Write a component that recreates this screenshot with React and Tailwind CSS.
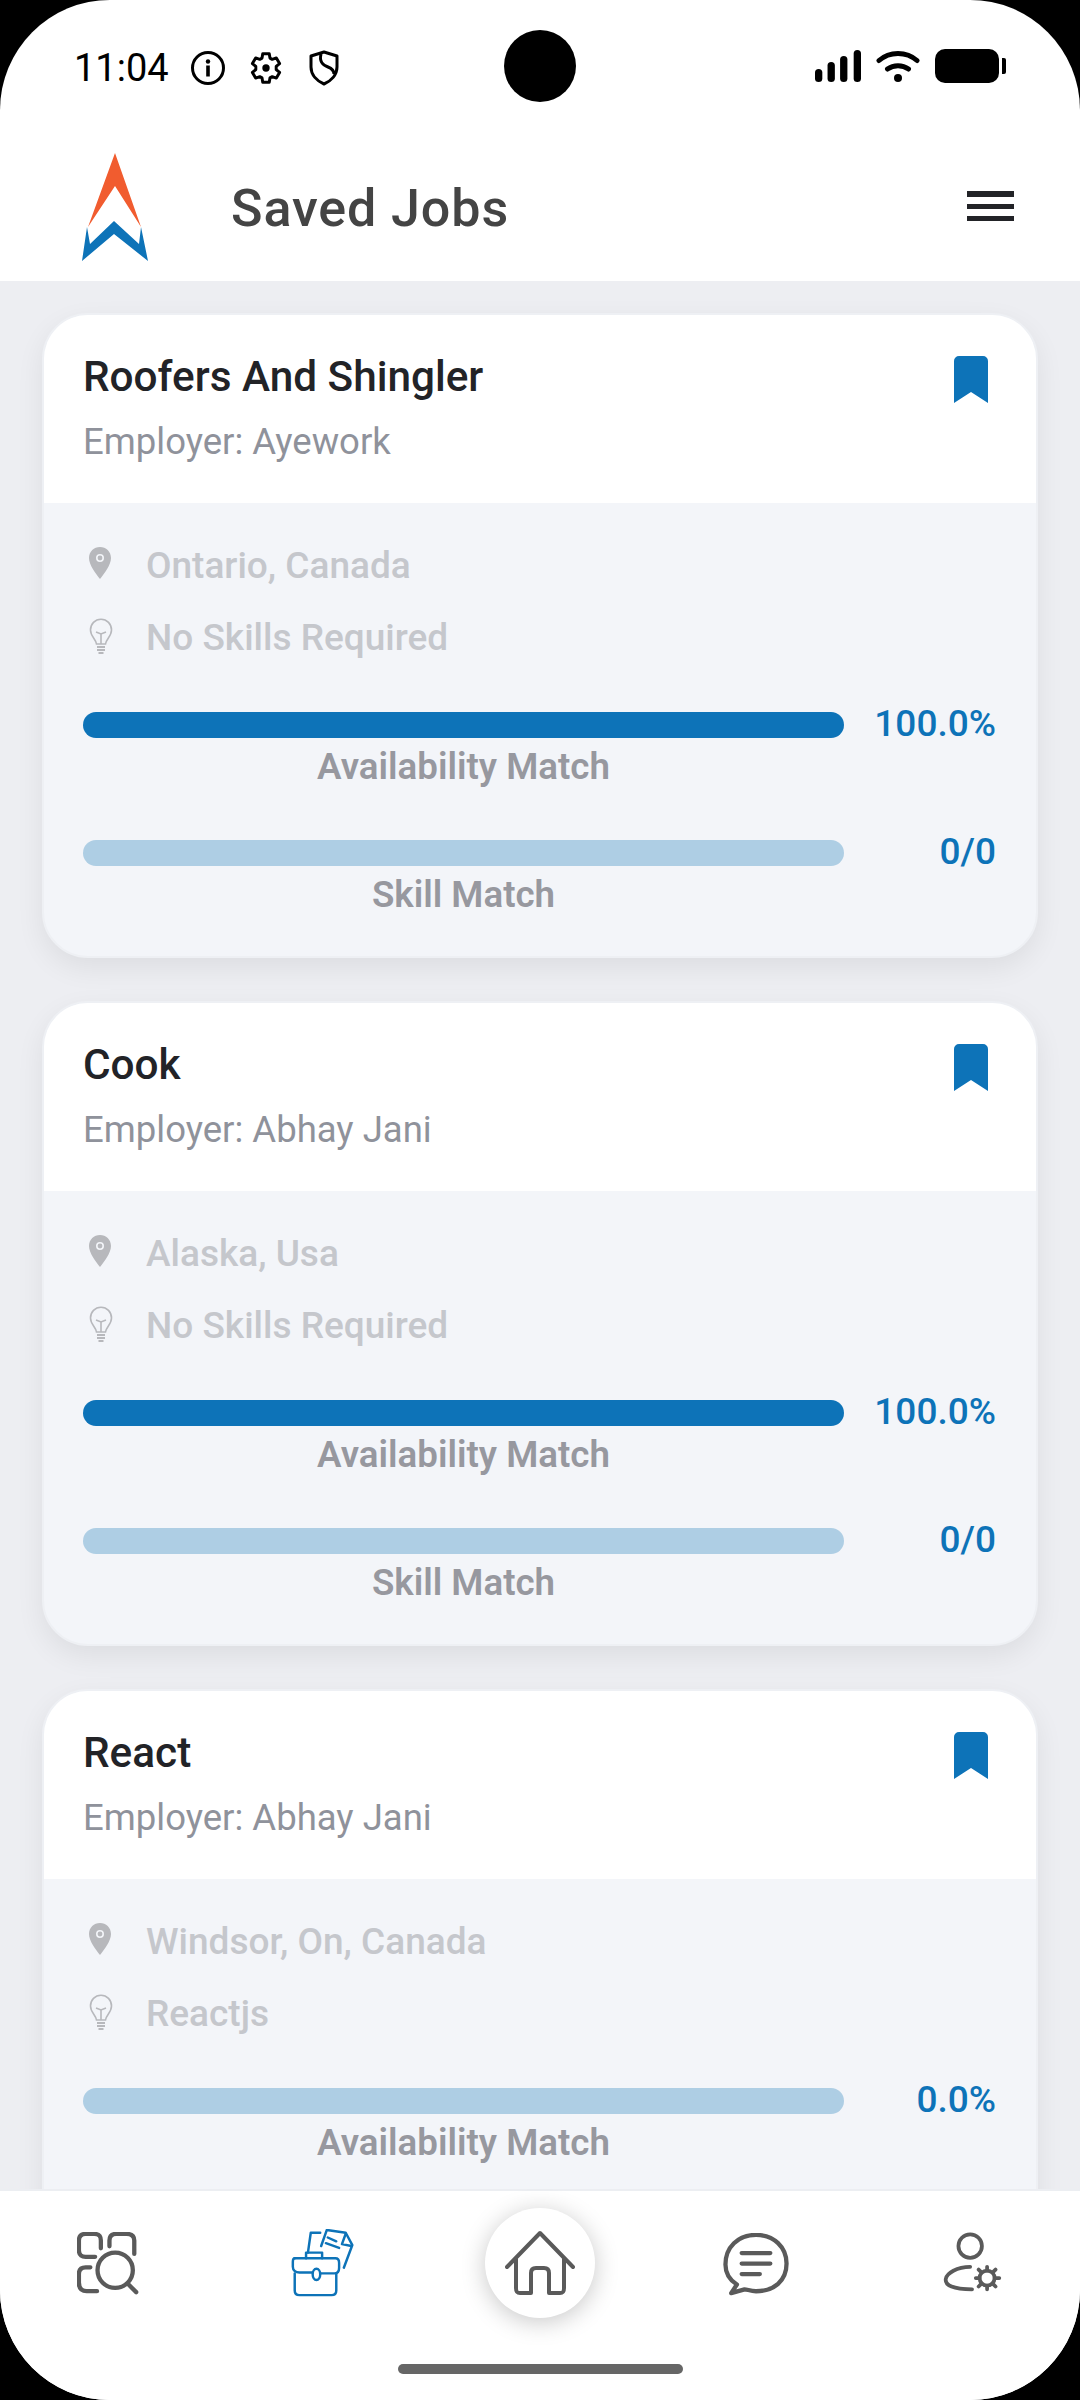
const BLUE = '#0d73b8'

const JOBS = [
  {
    title: 'Roofers And Shingler',
    employer: 'Employer: Ayework',
    location: 'Ontario, Canada',
    skills: 'No Skills Required',
    availability: '100.0%',
    availabilityFull: true,
    skill: '0/0',
  },
  {
    title: 'Cook',
    employer: 'Employer: Abhay Jani',
    location: 'Alaska, Usa',
    skills: 'No Skills Required',
    availability: '100.0%',
    availabilityFull: true,
    skill: '0/0',
  },
  {
    title: 'React',
    employer: 'Employer: Abhay Jani',
    location: 'Windsor, On, Canada',
    skills: 'Reactjs',
    availability: '0.0%',
    availabilityFull: false,
    skill: '0/0',
  },
]

function StatusBar() {
  return (
    <div className="relative h-[132px] shrink-0 flex items-start justify-between pt-[48px] pl-[75px] pr-[74px]">
      <div className="flex items-center h-[36px] mt-[2px]">
        <span className="ml-[-1px] text-[38px] leading-none text-black w-[91px]">11:04</span>
        <svg className="ml-[25px]" width="36" height="36" viewBox="0 0 36 36" fill="none">
          <circle cx="18" cy="18" r="15.5" stroke="#000" strokeWidth="3" />
          <circle cx="18" cy="11.5" r="2.2" fill="#000" />
          <rect x="16.2" y="15.5" width="3.6" height="11" fill="#000" />
        </svg>
        <svg className="ml-[23px]" width="34" height="36" viewBox="0 0 24 24" fill="none" stroke="#000" strokeWidth="2.1">
          <path d="M9.7 2h4.6l.5 3 1.6.9 2.9-1 2.3 4-2.4 2v2.2l2.4 2-2.3 4-2.9-1-1.6.9-.5 3H9.7l-.5-3-1.6-.9-2.9 1-2.3-4 2.4-2v-2.2l-2.4-2 2.3-4 2.9 1 1.6-.9z" strokeLinejoin="round" />
          <circle cx="12" cy="12" r="2.6" fill="#000" stroke="none" />
        </svg>
        <svg className="ml-[26px]" width="30" height="36" viewBox="0 0 30 36" fill="none" stroke="#000" strokeWidth="3">
          <path d="M15 2 L28 6 V17 C28 25 22 31 15 34 C8 31 2 25 2 17 V6 Z" strokeLinejoin="round" />
          <path d="M12 4 C10 12 14 15 19 17 C24 19 25 21 25 24" />
        </svg>
      </div>
      <div className="absolute left-[504px] top-[30px] w-[72px] h-[72px] rounded-full bg-black" />
      <div className="flex items-center h-[36px]">
        <svg width="46" height="32" viewBox="0 0 44 32" fill="#000" preserveAspectRatio="none">
          <rect x="0" y="19" width="7" height="13" rx="3.5" />
          <rect x="12" y="12" width="7" height="20" rx="3.5" />
          <rect x="24" y="6" width="7" height="26" rx="3.5" />
          <rect x="37" y="0" width="7" height="32" rx="3.5" />
        </svg>
        <svg className="ml-[15px]" width="44" height="32" viewBox="0 0 43 32" fill="none" stroke="#000" strokeWidth="5" strokeLinecap="round">
          <path d="M2.5 10.5 C13 1 30 1 40.5 10.5" />
          <path d="M11 19 C17 14.5 26 14.5 32 19" />
          <circle cx="21.5" cy="28" r="4" fill="#000" stroke="none" />
        </svg>
        <div className="ml-[15px] w-[64px] h-[34px] rounded-[10px] bg-black" />
        <div className="ml-[3px] w-[4px] h-[16px] rounded-r-[2px] bg-black" />
      </div>
    </div>
  )
}

function Header() {
  return (
    <div className="h-[149px] shrink-0 flex items-start justify-between pl-[82px] pr-[66px]">
      <div className="flex items-start">
        <svg className="mt-[21px]" width="66" height="109" viewBox="0 0 66 109">
          <path d="M33 0 L59 74 L33 33 L6 74 Z" fill="#f15c2f" />
          <path d="M5 74 L8 91 L32 68 L57 91 L59 74 L66 108 L32 81 L0 108 Z" fill={BLUE} />
        </svg>
        <h1 className="ml-[83px] mt-[47px] text-[52px] leading-[60px] font-medium tracking-[0.9px] text-[#444444]">
          Saved Jobs
        </h1>
      </div>
      <div className="mt-[59px] flex flex-col gap-[7px] w-[47px]">
        <div className="h-[6px] bg-[#222327]" />
        <div className="h-[5px] bg-[#222327]" />
        <div className="h-[5px] bg-[#222327]" />
      </div>
    </div>
  )
}

function PinIcon() {
  return (
    <svg width="22" height="32" viewBox="0 0 22 32" className="mt-[-6px]">
      <path fillRule="evenodd" d="M11 0 C17 0 22 4.5 22 11 C22 18 15 27 11 32 C7 27 0 18 0 11 C0 4.5 5 0 11 0 Z M11 7 A4 4 0 1 0 11 15 A4 4 0 1 0 11 7 Z" fill="#b7b8bc" />
      <circle cx="11" cy="11" r="2.4" fill="#b7b8bc" />
    </svg>
  )
}

function BulbIcon() {
  return (
    <svg width="24" height="36" viewBox="0 0 24 36" fill="none" stroke="#b7b8bc" strokeWidth="1.6" className="mt-[-4px]">
      <path d="M7.5 26 C7 21 1.5 18.5 1.5 12 C1.5 6 6 1.2 12 1.2 C18 1.2 22.5 6 22.5 12 C22.5 18.5 17 21 16.5 26 Z" />
      <path d="M7 14 L12 16 L17 14 M12 16 V26" />
      <path d="M8 29 H16 M8 32 H16 M9.5 35 H14.5" strokeWidth="2" />
    </svg>
  )
}

function InfoRow({ icon, text }) {
  return (
    <div className="flex items-center h-[40px]">
      <div className="w-[63px] pl-[6px] flex justify-start">{icon}</div>
      <span className="text-[37px] leading-[40px] font-medium text-[#c5c7cc]">{text}</span>
    </div>
  )
}

function MatchRow({ label, value, full }) {
  return (
    <div className="flex items-start">
      <div className="w-[761px] flex flex-col items-center">
        <div className={`w-full h-[26px] rounded-full ${full ? 'bg-[#0d73b8]' : 'bg-[#aecee4]'}`} />
        <span className="mt-[9px] text-[36.7px] leading-[40px] font-semibold text-[#97989f]">{label}</span>
      </div>
      <span className="flex-1 text-right text-[37px] leading-[24px] font-medium text-[#0d73b8] pr-[1px]">{value}</span>
    </div>
  )
}

function JobCard({ job }) {
  return (
    <div className="shrink-0 h-[645px] rounded-[46px] overflow-hidden bg-[#f3f5f9] border-2 border-[#eef0f4] shadow-[0_10px_28px_rgba(0,0,0,0.07)]">
      <div className="h-[188px] bg-white relative pt-[38px] pl-[39px]">
        <h2 className="text-[42.3px] leading-[48px] font-medium text-[#222327]">{job.title}</h2>
        <p className="mt-[20px] text-[36.5px] leading-[42px] text-[#8f929b]">{job.employer}</p>
        <svg className="absolute right-[48px] top-[41px]" width="34" height="47" viewBox="0 0 34 47">
          <path d="M5 0 H29 A5 5 0 0 1 34 5 V47 L17 36 L0 47 V5 A5 5 0 0 1 5 0 Z" fill={BLUE} />
        </svg>
      </div>
      <div className="pt-[43px] pl-[39px] pr-[39px]">
        <div className="flex flex-col gap-[32px]">
          <InfoRow icon={<PinIcon />} text={job.location} />
          <InfoRow icon={<BulbIcon />} text={job.skills} />
        </div>
        <div className="mt-[54px] flex flex-col gap-[53px]">
          <MatchRow label="Availability Match" value={job.availability} full={job.availabilityFull} />
          <MatchRow label="Skill Match" value={job.skill} />
        </div>
      </div>
    </div>
  )
}

function BottomNav() {
  const stroke = '#5a5a5a'
  return (
    <div className="relative h-[211px] shrink-0 bg-white border-t-2 border-[#eceef2] flex items-start pl-[77px] pt-[41px]">
      <svg width="63" height="63" viewBox="0 0 66 66" fill="none" stroke={stroke} strokeWidth="4.5" strokeLinecap="round">
        <path d="M19 26 H9 C4 26 2 23 2 19 V9 C2 4 5 2 9 2 H18 C23 2 25 4 25 9 V17" />
        <path d="M34 15 V9 C34 4 37 2 41 2 H52 C57 2 60 4 60 9 V23" />
        <path d="M14 37 H9 C4 37 2 40 2 44 V53 C2 59 5 62 10 62 H21" />
        <circle cx="40" cy="40" r="18.5" />
        <path d="M53 54 L62 63" />
      </svg>
      <svg className="ml-[150px] mt-[-3px]" width="68" height="68" viewBox="0 0 68 72" fill="none" stroke={BLUE} strokeWidth="2.6" strokeLinecap="round" strokeLinejoin="round">
        <path d="M3 31 H46 C49 31 50 33 50 36 V41 C50 45 48 47 45 47 H31" />
        <path d="M22 46 H8 C4 46 1 44 1 40 V35 C1 32 2 31 3 31" />
        <path d="M3 47 V65 C3 68 5 70 8 70 H42 C45 70 47 68 47 65 V47" />
        <ellipse cx="26" cy="48" rx="4" ry="6" />
        <path d="M15 31 V25 H32 V31" />
        <path d="M17 25 L20 4 H30" />
        <path d="M31 18 L37 1 L57 4 L64 17 L55 41" />
        <path d="M38 9 L47 13 M36 15 L50 20 M57 5 L53 16 L63 18" />
      </svg>
      <svg className="ml-[364px] mt-[1px]" width="68" height="63" viewBox="0 0 68 66" fill="none" stroke={stroke} strokeWidth="4.5" strokeLinecap="round" strokeLinejoin="round">
        <path d="M8 63 L14 54 C6 49 2 42 2 33 C2 15 15 2 34 2 C53 2 66 15 66 32 C66 50 53 61 34 61 C28 61 25 59 22 59 Z" />
        <path d="M19 21 H49 M19 32 H49 M19 43 H38" strokeWidth="4.5" />
      </svg>
      <svg className="ml-[152px]" width="62" height="62" viewBox="0 0 62 66" fill="none" stroke={stroke} strokeWidth="4" strokeLinecap="round" strokeLinejoin="round">
        <circle cx="28" cy="15" r="12.5" />
        <path d="M28 37 C14 37 3 44 2 50 C1 57 10 61 30 61" />
        <circle cx="46" cy="49" r="8" />
        <path d="M46 37 V41 M46 57 V61 M34 49 H38 M54 49 H59 M37 40 L40 43 M52 55 L55 58 M37 58 L40 55 M52 43 L55 40" />
      </svg>
      <div className="absolute left-[485px] top-[17px] w-[110px] h-[110px] rounded-full bg-white shadow-[0_4px_24px_rgba(0,0,0,0.22)] flex items-center justify-center">
        <svg width="70" height="66" viewBox="0 0 70 66" fill="none" stroke={stroke} strokeWidth="4" strokeLinecap="round" strokeLinejoin="round">
          <path d="M2 37 L35 3 L68 37" />
          <path d="M11 29 V58 C11 62 12 63 15 63 H26 V43 C26 39 28 38 31 38 H39 C42 38 44 39 44 43 V63 H55 C58 63 59 62 59 58 V29" />
        </svg>
      </div>
      <div className="absolute left-[398px] top-[173px] w-[285px] h-[10px] rounded-full bg-[#666666]" />
    </div>
  )
}

export default function App() {
  return (
    <div className="w-[1080px] h-[2400px] bg-black overflow-hidden font-['Roboto',sans-serif]">
      <div className="w-full h-full rounded-[110px] overflow-hidden bg-white flex flex-col">
        <StatusBar />
        <Header />
        <div className="flex-1 min-h-0 overflow-hidden bg-[#edeef2] px-[42px] pt-[32px] flex flex-col gap-[43px]">
          {JOBS.map((job) => (
            <JobCard key={job.title} job={job} />
          ))}
        </div>
        <BottomNav />
      </div>
    </div>
  )
}
